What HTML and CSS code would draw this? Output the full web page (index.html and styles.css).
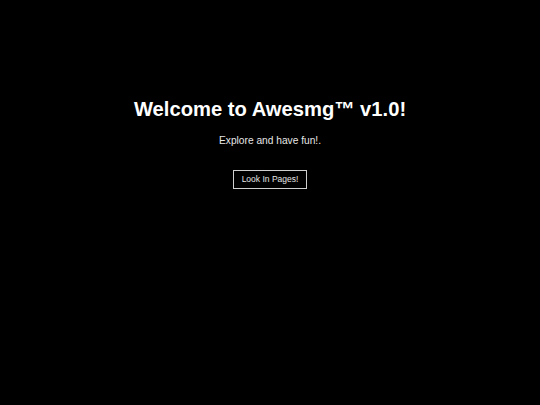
FILE: index.html
```html
<!DOCTYPE html>
<html>
<head>
<meta charset="utf-8">
<link rel="stylesheet" href="styles.css">
</head>
<body>
<main class="hero">
  <h1 class="title">Welcome to Awesmg™ v1.0!</h1>
  <p class="subtitle">Explore and have fun!.</p>
  <button class="btn">Look In Pages!</button>
</main>
</body>
</html>
```
FILE: styles.css
```css
html, body {
  margin: 0;
  padding: 0;
  background: #000;
  height: 100%;
}
body {
  font-family: "Liberation Sans", Arial, sans-serif;
  color: #fff;
}
.hero {
  display: flex;
  flex-direction: column;
  align-items: center;
  padding-top: 97px;
}
.title {
  margin: 0;
  font-size: 20.2px;
  font-weight: bold;
  line-height: 24px;
}
.subtitle {
  margin: 14px 0 0 0;
  font-size: 10.2px;
  line-height: 12px;
  color: #e6e6e6;
}
.btn {
  margin-top: 23px;
  background: transparent;
  color: #e6e6e6;
  border: 1px solid #cfcfcf;
  font-family: "Liberation Sans", Arial, sans-serif;
  font-size: 8.5px;
  height: 19px;
  padding: 0 8px;
  line-height: 17px;
}
```
